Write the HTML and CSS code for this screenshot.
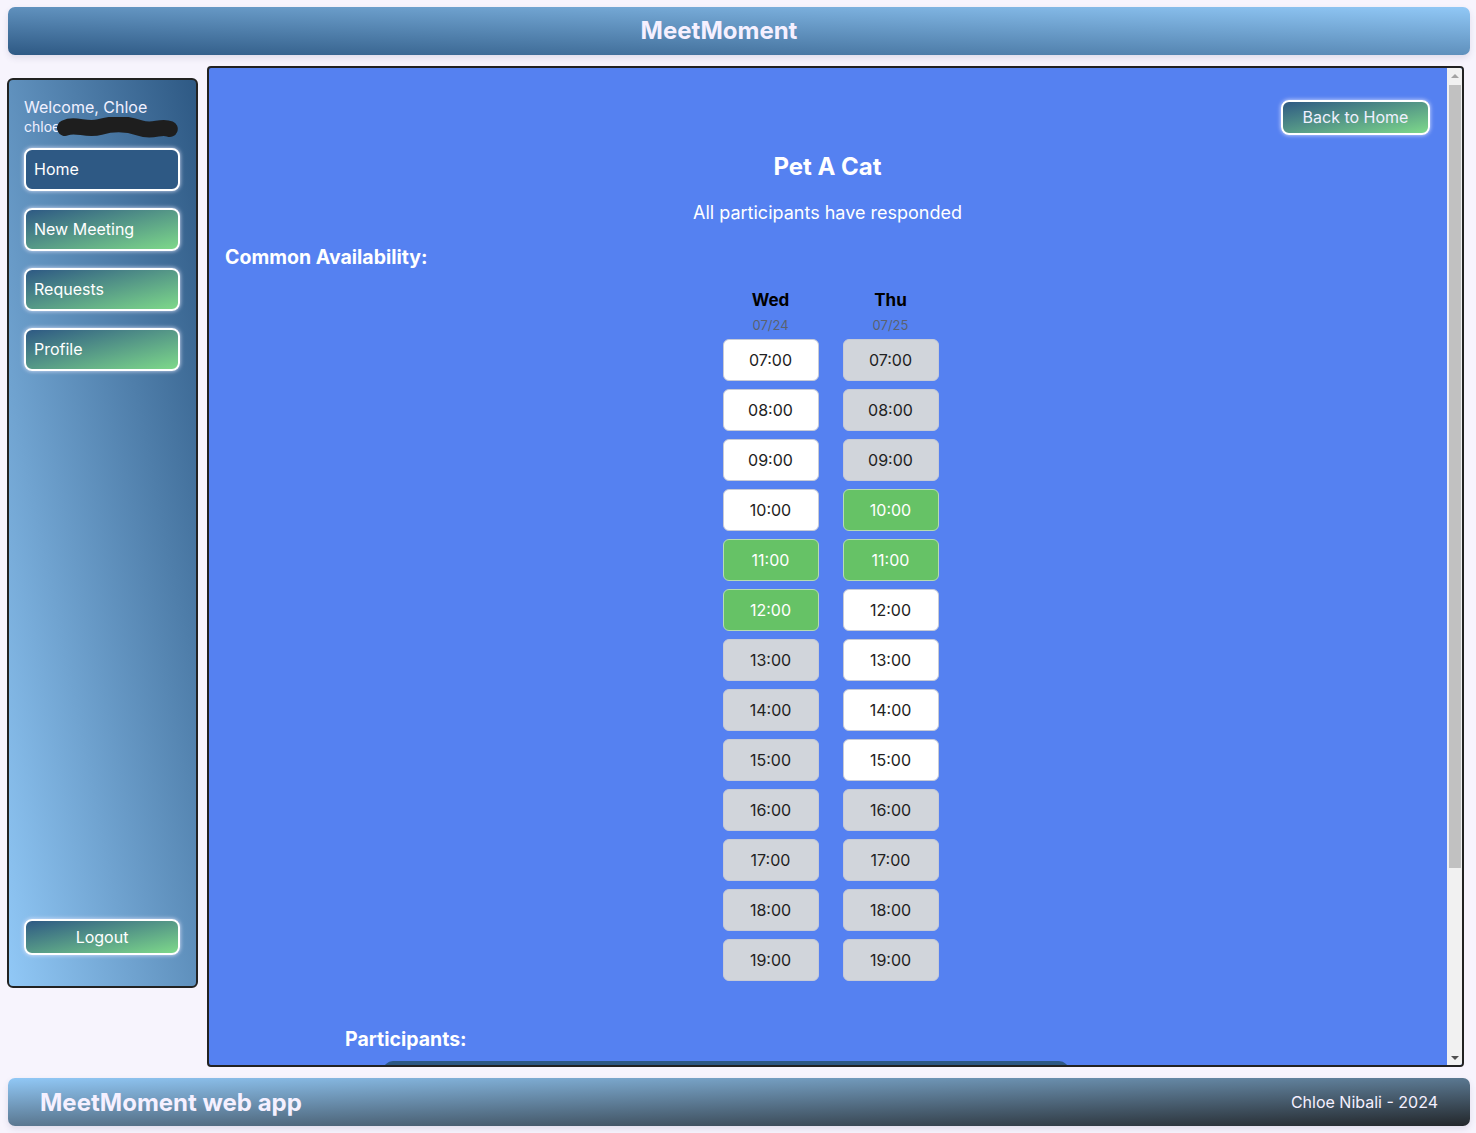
FILE: index.html
```html
<!DOCTYPE html>
<html lang="en">
<head>
<meta charset="utf-8">
<title>MeetMoment</title>
<link rel="stylesheet" href="styles.css">
</head>
<body>
<header class="topbar">MeetMoment</header>
<div class="layout">
  <aside class="sidebar">
    <div class="welcome">Welcome, Chloe</div>
    <div class="email">chloe<svg class="redact" width="124" height="22" viewBox="0 0 124 22"><path d="M9 11 C 20 6, 30 14, 44 10 S 70 6, 84 11 S 104 8, 114 12" fill="none" stroke="#1e1e1e" stroke-width="16" stroke-linecap="round"/></svg></div>
    <a class="navbtn active">Home</a>
    <a class="navbtn">New Meeting</a>
    <a class="navbtn">Requests</a>
    <a class="navbtn">Profile</a>
    <a class="logout">Logout</a>
  </aside>
  <main class="main">
    <div class="content">
      <div class="actions"><a class="backbtn">Back to Home</a></div>
      <h1 class="title">Pet A Cat</h1>
      <p class="status">All participants have responded</p>
      <h2 class="section">Common Availability:</h2>
      <div class="grid">
        <div class="col">
          <div class="day">Wed</div>
          <div class="date">07/24</div>
          <div class="slot free">07:00</div>
          <div class="slot free">08:00</div>
          <div class="slot free">09:00</div>
          <div class="slot free">10:00</div>
          <div class="slot common">11:00</div>
          <div class="slot common">12:00</div>
          <div class="slot busy">13:00</div>
          <div class="slot busy">14:00</div>
          <div class="slot busy">15:00</div>
          <div class="slot busy">16:00</div>
          <div class="slot busy">17:00</div>
          <div class="slot busy">18:00</div>
          <div class="slot busy">19:00</div>
        </div>
        <div class="col">
          <div class="day">Thu</div>
          <div class="date">07/25</div>
          <div class="slot busy">07:00</div>
          <div class="slot busy">08:00</div>
          <div class="slot busy">09:00</div>
          <div class="slot common">10:00</div>
          <div class="slot common">11:00</div>
          <div class="slot free">12:00</div>
          <div class="slot free">13:00</div>
          <div class="slot free">14:00</div>
          <div class="slot free">15:00</div>
          <div class="slot busy">16:00</div>
          <div class="slot busy">17:00</div>
          <div class="slot busy">18:00</div>
          <div class="slot busy">19:00</div>
        </div>
      </div>
      <section class="participants">
        <h2 class="section">Participants:</h2>
        <div class="plist"></div>
      </section>
    </div>
    <div class="scrollbar">
      <div class="sb-btn"><span class="arrow up"></span></div>
      <div class="sb-thumb"></div>
      <div class="sb-space"></div>
      <div class="sb-btn"><span class="arrow down"></span></div>
    </div>
  </main>
</div>
<footer class="footer">
  <span class="fbrand">MeetMoment web app</span>
  <span class="fcredit">Chloe Nibali - 2024</span>
</footer>
</body>
</html>
```
FILE: styles.css
```css
* { box-sizing: border-box; }
html, body { margin: 0; padding: 0; }
body {
  background: #f7f4fd;
  font-family: Inter, "Noto Sans", sans-serif;
  padding: 7px 6px 0 8px;
  width: 1476px;
  height: 1133px;
  overflow: hidden;
}
.topbar {
  height: 48px;
  border-radius: 7px;
  background: linear-gradient(to top right, #2e5984, #91c8f6);
  color: #f5f0ff;
  font-weight: 700;
  font-size: 24px;
  line-height: 48px;
  text-align: center;
  padding-right: 40px;
  box-shadow: 0 3px 6px rgba(60, 50, 100, 0.12);
}
.layout {
  display: flex;
  align-items: flex-start;
  margin-top: 11px;
  margin-left: -1px;
}
.sidebar {
  width: 191px;
  height: 910px;
  margin-top: 12px;
  border: 2px solid #222;
  border-radius: 6px;
  background: linear-gradient(to bottom left, #2e5984, #91c8f6);
  padding: 17px 16px 31px 15px;
  display: flex;
  flex-direction: column;
  color: #f0f0ff;
}
.welcome { font-size: 16px; line-height: 20px; }
.email {
  font-size: 14px;
  line-height: 18px;
  display: flex;
  align-items: center;
  height: 20px;
  margin-bottom: 11px;
}
.redact { margin-left: -4px; margin-top: 2px; }
.navbtn {
  display: block;
  height: 43px;
  border: 2px solid #fff;
  border-radius: 8px;
  padding-left: 8px;
  line-height: 39px;
  font-size: 16px;
  color: #fff;
  background: linear-gradient(to bottom right, #2e5984, #7ed98a);
  box-shadow: 0 0 4px rgba(235, 235, 255, 0.9);
  margin-bottom: 17px;
}
.navbtn.active { background: #2e5984; }
.logout {
  margin-top: auto;
  height: 36px;
  border: 2px solid #fff;
  border-radius: 8px;
  text-align: center;
  line-height: 32px;
  font-size: 16px;
  color: #fff;
  background: linear-gradient(to bottom right, #2e5984, #7ed98a);
  box-shadow: 0 0 4px rgba(235, 235, 255, 0.9);
}
.main {
  width: 1257px;
  height: 1001px;
  margin-left: 9px;
  border: 2px solid #222;
  border-radius: 4px;
  background: #5581f1;
  display: flex;
  overflow: hidden;
  color: #fff;
}
.content {
  flex: 1;
  min-width: 0;
  overflow: hidden;
  padding: 32px 17px 60px 16px;
}
.scrollbar {
  width: 15px;
  flex: none;
  background: #f1f1f1;
  display: flex;
  flex-direction: column;
}
.sb-btn {
  height: 15px;
  display: flex;
  align-items: center;
  justify-content: center;
}
.arrow {
  width: 0;
  height: 0;
  border-left: 4px solid transparent;
  border-right: 4px solid transparent;
}
.arrow.up { border-bottom: 4px solid #a3a3a3; }
.arrow.down { border-top: 4px solid #505050; }
.sb-thumb {
  height: 783px;
  margin: 2px 1px 0 2px;
  background: #c1c1c1;
}
.sb-space { flex: 1; }
.actions { display: flex; justify-content: flex-end; }
.backbtn {
  display: block;
  width: 149px;
  height: 35px;
  border: 2px solid #fff;
  border-radius: 8px;
  text-align: center;
  line-height: 31px;
  font-size: 16px;
  color: #f0f0ff;
  background: linear-gradient(to bottom right, #2e5984, #7ed98a);
  box-shadow: 0 0 4px rgba(235, 235, 255, 0.9);
}
.title {
  margin: 17px 0 0;
  font-size: 24px;
  line-height: 30px;
  font-weight: 700;
  text-align: center;
}
.status {
  margin: 20px 0 0;
  font-size: 18px;
  line-height: 22px;
  text-align: center;
}
.section {
  margin: 21px 0 0;
  font-size: 19.5px;
  line-height: 24px;
  font-weight: 700;
}
.grid {
  display: flex;
  justify-content: center;
  gap: 24px;
  margin: 20px 0 0 6px;
}
.col {
  width: 96px;
  display: flex;
  flex-direction: column;
  align-items: stretch;
  gap: 8px;
}
.day {
  color: #000;
  font-weight: 700;
  font-size: 17px;
  line-height: 22px;
  text-align: center;
}
.date {
  color: #5a6170;
  font-size: 13px;
  line-height: 16px;
  text-align: center;
  margin-top: -2px;
  margin-bottom: -2px;
}
.slot {
  height: 42px;
  border: 1px solid #c8cbd6;
  border-radius: 6px;
  font-size: 16px;
  line-height: 40px;
  text-align: center;
  color: #222;
}
.slot.free { background: #fff; }
.slot.busy { background: #d1d5db; }
.slot.common { background: #66c266; color: #fff; border-color: #b7dcb0; }
.participants { padding-left: 120px; margin-top: 46px; }
.participants .section { margin-top: 0; }
.plist {
  margin: 10px 0 0 38px;
  width: 686px;
  height: 180px;
  background: #2e5984;
  border-radius: 10px;
}
.footer {
  margin-top: 11px;
  height: 48px;
  border-radius: 7px;
  background: linear-gradient(to bottom right, #91c8f6, #23272b);
  display: flex;
  align-items: center;
  justify-content: space-between;
  padding: 0 32px 0 32px;
  color: #f5f0ff;
  box-shadow: 0 3px 6px rgba(60, 50, 100, 0.12);
}
.fbrand { font-weight: 700; font-size: 24px; }
.fcredit { font-size: 16px; }
```
